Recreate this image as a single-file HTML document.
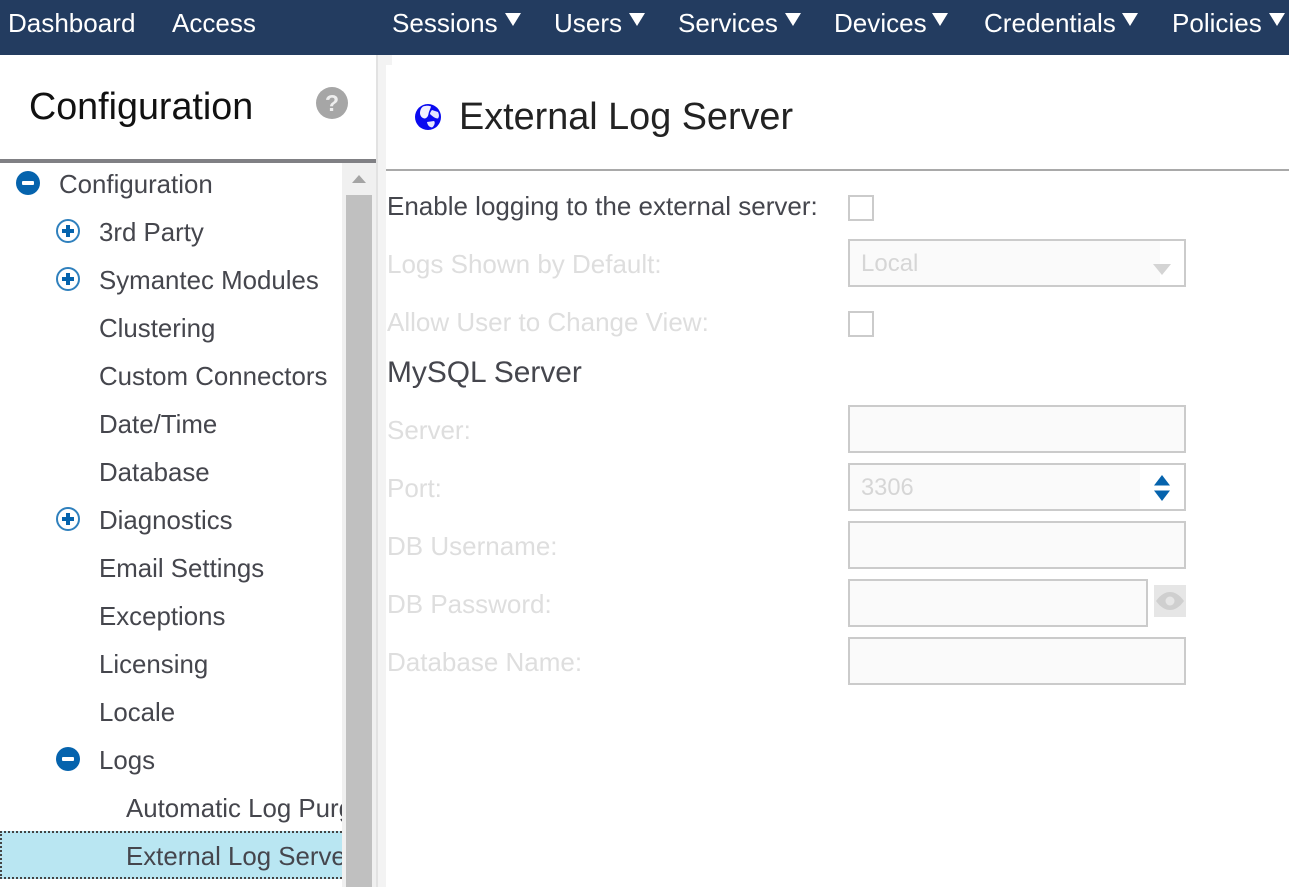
<!DOCTYPE html>
<html>
<head>
<meta charset="utf-8">
<style>
html,body{margin:0;padding:0;background:#fff;width:1289px;height:887px;overflow:hidden;}
body{position:relative;font-family:"Liberation Sans",Arial,sans-serif;font-size:26px;color:#444;}
.a{position:absolute;}
.t{position:absolute;white-space:nowrap;line-height:50px;height:50px;}
.nav{color:#fff;top:-1px;line-height:48px;font-size:26.05px;}
.tri{position:absolute;top:13px;width:0;height:0;border-left:8.5px solid transparent;border-right:8.5px solid transparent;border-top:13px solid #fff;}
.tree{color:#45464d;font-size:25.85px;}
.lab{color:#dedede;}
.box{position:absolute;box-sizing:border-box;border:2px solid #cbcbcb;background:#fafafa;}
.chk{position:absolute;box-sizing:border-box;width:26px;height:26px;left:848px;border:2px solid #cbcbcb;background:#fff;}
svg{position:absolute;display:block;}
</style>
</head>
<body>
<div class="a" style="left:0;top:0;width:1289px;height:55px;background:#233c60;"></div>
<div class="t nav" style="left:8px;">Dashboard</div>
<div class="t nav" style="left:172px;">Access</div>
<div class="t nav" style="left:392px;">Sessions</div><div class="tri" style="left:505px;"></div>
<div class="t nav" style="left:554px;">Users</div><div class="tri" style="left:629px;"></div>
<div class="t nav" style="left:678px;">Services</div><div class="tri" style="left:785px;"></div>
<div class="t nav" style="left:834px;">Devices</div><div class="tri" style="left:932px;"></div>
<div class="t nav" style="left:984px;">Credentials</div><div class="tri" style="left:1122px;"></div>
<div class="t nav" style="left:1172px;">Policies</div><div class="tri" style="left:1269px;"></div>

<!-- splitter -->
<div class="a" style="left:376px;top:55px;width:2px;height:832px;background:#e2e2e2;"></div>
<div class="a" style="left:378px;top:55px;width:8px;height:832px;background:#f3f3f3;"></div>
<div class="a" style="left:386px;top:55px;width:6px;height:10px;background:#f3f3f3;"></div>

<!-- sidebar header -->
<div class="t" style="left:29px;top:81px;font-size:37.7px;color:#111;">Configuration</div>
<svg style="left:316px;top:87px;" width="32" height="32" viewBox="0 0 32 32"><circle cx="16" cy="16" r="16" fill="#a6a6a6"/><text x="16" y="24" font-family="Liberation Sans" font-weight="bold" font-size="23" fill="#eee" text-anchor="middle">?</text></svg>
<div class="a" style="left:0;top:159px;width:376px;height:4px;background:#808084;"></div>

<!-- scrollbar -->
<div class="a" style="left:342px;top:163px;width:34px;height:724px;background:#f0f0f0;"></div>
<div class="a" style="left:346px;top:195px;width:26px;height:692px;background:#c0c0c0;"></div>
<div class="a" style="left:352px;top:175px;width:0;height:0;border-left:7px solid transparent;border-right:7px solid transparent;border-top:0;border-bottom:8px solid #a4a4a4;"></div>

<!-- tree -->
<svg style="left:16px;top:171px;" width="24" height="24" viewBox="0 0 24 24"><circle cx="12" cy="12" r="12" fill="#0563ad"/><rect x="6" y="10" width="12" height="4" rx="1" fill="#fff"/></svg>
<div class="t tree" style="left:59px;top:160px;">Configuration</div>

<svg style="left:56px;top:219px;" width="24" height="24" viewBox="0 0 24 24"><circle cx="12" cy="12" r="11" fill="#fff" stroke="#2f80bd" stroke-width="2"/><path d="M6 12H18M12 6V18" stroke="#0563ad" stroke-width="4"/></svg>
<div class="t tree" style="left:99px;top:208px;">3rd Party</div>

<svg style="left:56px;top:267px;" width="24" height="24" viewBox="0 0 24 24"><circle cx="12" cy="12" r="11" fill="#fff" stroke="#2f80bd" stroke-width="2"/><path d="M6 12H18M12 6V18" stroke="#0563ad" stroke-width="4"/></svg>
<div class="t tree" style="left:99px;top:256px;">Symantec Modules</div>

<div class="t tree" style="left:99px;top:304px;">Clustering</div>
<div class="t tree" style="left:99px;top:352px;">Custom Connectors</div>
<div class="t tree" style="left:99px;top:400px;">Date/Time</div>
<div class="t tree" style="left:99px;top:448px;">Database</div>

<svg style="left:56px;top:507px;" width="24" height="24" viewBox="0 0 24 24"><circle cx="12" cy="12" r="11" fill="#fff" stroke="#2f80bd" stroke-width="2"/><path d="M6 12H18M12 6V18" stroke="#0563ad" stroke-width="4"/></svg>
<div class="t tree" style="left:99px;top:496px;">Diagnostics</div>

<div class="t tree" style="left:99px;top:544px;">Email Settings</div>
<div class="t tree" style="left:99px;top:592px;">Exceptions</div>
<div class="t tree" style="left:99px;top:640px;">Licensing</div>
<div class="t tree" style="left:99px;top:688px;">Locale</div>

<svg style="left:56px;top:747px;" width="24" height="24" viewBox="0 0 24 24"><circle cx="12" cy="12" r="12" fill="#0563ad"/><rect x="6" y="10" width="12" height="4" rx="1" fill="#fff"/></svg>
<div class="t tree" style="left:99px;top:736px;">Logs</div>

<div class="a" style="left:0;top:784px;width:342px;height:48px;overflow:hidden;"><div class="t tree" style="left:126px;top:0;">Automatic Log Purge</div></div>
<div class="a" style="left:0;top:831px;width:342px;height:48px;box-sizing:border-box;background:#b9e6f2;border:2px dotted #444;border-right:0;overflow:hidden;"><div class="t tree" style="left:124px;top:-1px;">External Log Server</div></div>

<!-- main header -->
<svg style="left:414px;top:103px;" width="28" height="28" viewBox="0 0 28 28"><circle cx="14" cy="14" r="13" fill="#0a0af0"/><path d="M9 3.500C12 2.500 15 2.500 17 3.500C16 7 15 8 14.500 11C14 14 12 15.500 10.500 15.500C8 15 6 13 6 10C6 7.500 7 5 9 3.500Z" fill="#f2f0ff"/><path d="M18 7L24 9C25.500 12 25 14 24 15.500C21 15.500 18 13 16 11C16 9.500 17 8 18 7Z" fill="#e4e4ff"/><path d="M13 19L20 18C21.500 19 20.500 23 18 24.500C15 24 13.500 22 13 19Z" fill="#e6e6ff"/></svg>
<div class="t" style="left:459px;top:92px;font-size:37.8px;color:#222;">External Log Server</div>
<div class="a" style="left:386px;top:169px;width:903px;height:2px;background:#a9a9a9;"></div>

<!-- form -->
<div class="t" style="left:387px;top:181px;color:#45464d;">Enable logging to the external server:</div>
<div class="chk" style="top:195px;"></div>

<div class="t lab" style="left:387px;top:239px;">Logs Shown by Default:</div>
<div class="box" style="left:848px;top:239px;width:338px;height:48px;background:#fff;"></div>
<div class="a" style="left:850px;top:241px;width:310px;height:44px;background:#fafafa;"></div>
<div class="t" style="left:861px;top:239px;color:#d6d6d6;font-size:24px;">Local</div>
<div class="a" style="left:1153px;top:264px;width:0;height:0;border-left:9px solid transparent;border-right:9px solid transparent;border-top:11px solid #d4d4d4;"></div>

<div class="t lab" style="left:387px;top:297px;">Allow User to Change View:</div>
<div class="chk" style="top:311px;"></div>

<div class="t" style="left:387px;top:348px;font-size:29.9px;color:#45464d;">MySQL Server</div>

<div class="t lab" style="left:387px;top:405px;">Server:</div>
<div class="box" style="left:848px;top:405px;width:338px;height:48px;"></div>

<div class="t lab" style="left:387px;top:463px;">Port:</div>
<div class="box" style="left:848px;top:463px;width:338px;height:48px;background:#fff;"></div>
<div class="a" style="left:850px;top:465px;width:290px;height:44px;background:#fafafa;"></div>
<div class="t" style="left:861px;top:463px;color:#d6d6d6;font-size:23.7px;">3306</div>
<svg style="left:1153px;top:474px;" width="18" height="28" viewBox="0 0 18 28"><path d="M9 1L17 11.500H1Z" fill="#0563ad"/><path d="M1 16.500H17L9 27Z" fill="#0563ad"/></svg>

<div class="t lab" style="left:387px;top:521px;">DB Username:</div>
<div class="box" style="left:848px;top:521px;width:338px;height:48px;"></div>

<div class="t lab" style="left:387px;top:579px;">DB Password:</div>
<div class="box" style="left:848px;top:579px;width:300px;height:48px;"></div>
<div class="a" style="left:1154px;top:585px;width:32px;height:32px;background:#e6e6e6;"></div>
<svg style="left:1156px;top:591px;" width="28" height="20" viewBox="0 0 28 20"><path d="M0 10C5 3 10 1 14 1C18 1 23 3 28 10C23 17 18 19 14 19C10 19 5 17 0 10Z" fill="#cfcfcf"/><circle cx="14" cy="10" r="4.500" fill="#e6e6e6"/></svg>

<div class="t lab" style="left:387px;top:637px;">Database Name:</div>
<div class="box" style="left:848px;top:637px;width:338px;height:48px;"></div>
</body>
</html>
